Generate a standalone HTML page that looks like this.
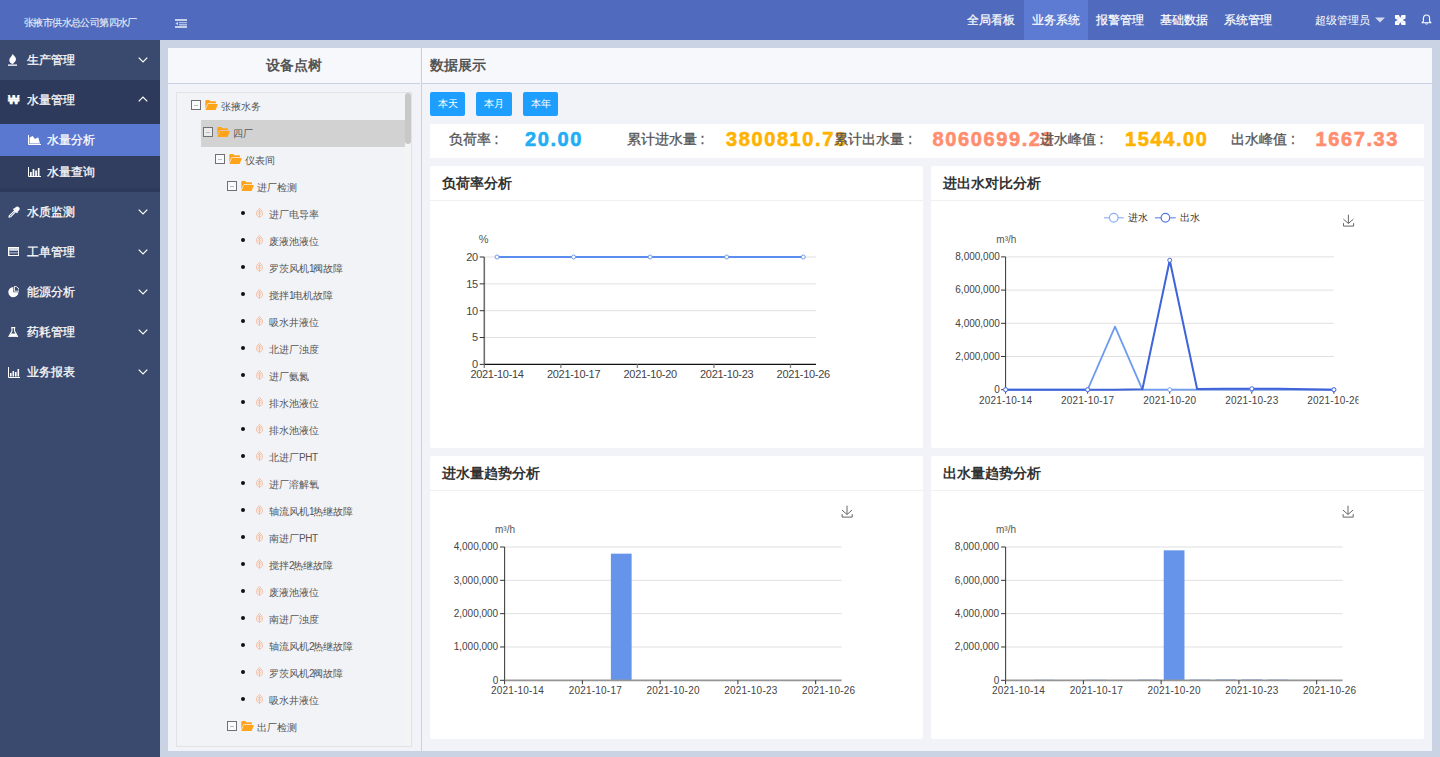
<!DOCTYPE html>
<html><head><meta charset="utf-8">
<style>
*{box-sizing:border-box;margin:0;padding:0}
html,body{width:1440px;height:757px;overflow:hidden}
body{position:relative;background:#CAD3E4;font-family:"Liberation Sans",sans-serif;color:#333}
.abs{position:absolute}
#hdr{left:0;top:0;width:1440px;height:40px;background:#506BBD}
#hdr .title{left:24px;top:15.5px;font-size:10px;color:#E6EBF7;white-space:nowrap;letter-spacing:-0.6px;-webkit-text-stroke:0.15px #E6EBF7}
.nav{top:0;height:40px;width:64px;color:#fff;font-size:12px;line-height:40px;text-align:center;-webkit-text-stroke:0.2px #fff}
.nav.act{background:#5D7BD3}
#side{left:0;top:40px;width:160px;height:717px;background:#3A4A6E}
.mi{left:0;width:160px;height:40px;color:#fff;font-size:12px;line-height:40px;-webkit-text-stroke:0.25px #fff}
.mi .t{position:absolute;left:27px;top:0}
.mi .ic{position:absolute;left:8px;top:14px;width:10px;height:12px}
.chev{position:absolute;left:138px;top:16.5px;width:10px;height:6px}
.sub{left:0;width:160px;height:32px;color:#fff;font-size:12px;line-height:32px;-webkit-text-stroke:0.25px #fff}
.sub .t{position:absolute;left:47px;top:0}
.sub .ic{position:absolute;left:28px;top:10px;width:12px;height:11px}
#lp{left:168px;top:48px;width:252px;height:703px;background:#F2F3F8}
#lph{left:0;top:0;width:252px;height:36px;background:#F6F8FC;border-bottom:1px solid #C9D2E5;font-size:14px;font-weight:bold;color:#555;text-align:center;line-height:35px}
#tree{left:8px;top:44px;width:236px;height:655px;border:1px solid #E2E2E2;background:#F2F3F7;overflow:hidden}
.row{left:0;height:27px;width:236px;font-size:10px;color:#555;line-height:27px;white-space:nowrap}
.cb{position:absolute;top:7px;width:9.6px;height:9.6px;border:1px solid #707070;background:rgba(255,255,255,0.55)}
.cb:after{content:"";position:absolute;left:2px;top:3.5px;width:4px;height:1px;background:#BBB}
.fold{position:absolute}
.dot{position:absolute;top:9.9px;width:4.6px;height:4.6px;border-radius:50%;background:#111;margin-left:-0.2px}
.leaf{position:absolute}
#divl{left:420px;top:48px;width:2px;height:703px;background:#F2F3F8}
#divl:after{content:"";position:absolute;left:1px;top:0;width:1px;height:703px;background:#C9D2E5}
#rp{left:422px;top:48px;width:1010px;height:703px;background:#F2F3F8}
#rph{left:0;top:0;width:1010px;height:36px;background:#F6F8FC;border-bottom:1px solid #C9D2E5;font-size:14px;font-weight:bold;color:#555;line-height:35px;padding-left:8px}
.btn{top:44px;height:24px;background:#1E9FFF;color:#fff;font-size:10px;line-height:24px;text-align:center;border-radius:2px}
#stats{left:8px;top:76px;width:994px;height:34px;background:#fff}
.sl{position:absolute;top:-2px;line-height:34px;font-size:14px;color:#555;white-space:nowrap;-webkit-text-stroke:0.3px #555}
.sv{position:absolute;top:-2px;line-height:34px;font-size:20px;font-weight:bold;white-space:nowrap;-webkit-text-stroke:0.6px currentColor}
.card{background:#fff;border-radius:2px;width:493px;overflow:hidden}
.card .ch{position:absolute;left:0;top:0;width:493px;height:35px;border-bottom:1px solid #F0F0F0;font-size:14px;font-weight:bold;color:#333;line-height:34px;padding-left:12px}
.card svg{position:absolute;left:0;top:0}
</style></head><body>

<div id="hdr" class="abs">
  <div class="abs title">张掖市供水总公司第四水厂</div>
  <svg class="abs" style="left:175px;top:19px" width="12" height="9" viewBox="0 0 12 9"><rect x="0" y="0" width="12" height="2" fill="#C6D1EC"/><rect x="4" y="3.2" width="8" height="1" fill="#C6D1EC"/><rect x="4" y="5" width="8" height="1.5" fill="#AFC0E6"/><rect x="0" y="7" width="12" height="2" fill="#C6D1EC"/><path d="M3 2.8 L0.4 4.5 L3 6.2Z" fill="#C6D1EC"/></svg>
  <div class="abs nav" style="left:959px">全局看板</div>
  <div class="abs nav act" style="left:1024px">业务系统</div>
  <div class="abs nav" style="left:1088px">报警管理</div>
  <div class="abs nav" style="left:1152px">基础数据</div>
  <div class="abs nav" style="left:1216px">系统管理</div>
  <div class="abs" style="left:1315px;top:0;height:40px;line-height:40px;font-size:11.3px;color:#fff;white-space:nowrap">超级管理员</div>
  <svg class="abs" style="left:1375px;top:17px" width="10" height="6" viewBox="0 0 10 6"><path d="M0 0.6 H10 L5 5.4Z" fill="#D3D9EE"/></svg>
  <svg class="abs" style="left:1395px;top:15px" width="10.5" height="10" viewBox="0 0 10.5 10"><path d="M0 0 H3.9 L5.25 3 L6.6 0 H10.5 V3.6 L7.6 5 L10.5 6.4 V10 H6.6 L5.25 7 L3.9 10 H0 V6.4 L2.9 5 L0 3.6Z" fill="#fff"/><path d="M3.6 3.4 L2.6 2.4 M6.9 3.4 L7.9 2.4 M3.6 6.6 L2.6 7.6 M6.9 6.6 L7.9 7.6" stroke="#506BBD" stroke-width="0.5"/></svg>
  <svg class="abs" style="left:1421px;top:14px" width="11" height="11" viewBox="0 0 11 11"><path d="M5.5 1 C3.2 1 2.4 2.8 2.4 4.6 V7.2 L1 8.8 H10 L8.6 7.2 V4.6 C8.6 2.8 7.8 1 5.5 1Z" fill="none" stroke="#fff" stroke-width="1.1" stroke-linejoin="round"/><path d="M4.3 9.6 Q5.5 10.8 6.7 9.6" fill="none" stroke="#fff" stroke-width="1"/></svg>

</div>

<div id="side" class="abs">
<div class="abs mi" style="top:0"><svg class="ic" style="left:7.7px;top:14px;width:9.4px;height:12px" viewBox="0 0 9.4 12"><path d="M4.7 0 C5.3 1.5 8 2.8 8 5.2 C8 7.2 6.2 8.6 4.8 9.9 C2.7 9.7 1.3 8.1 1.3 6.2 C1.3 4 3 3.4 3.7 1.8Z" fill="#fff"/><rect x="0" y="10.4" width="9.4" height="1.5" fill="#E8EAF2"/></svg><span class="t">生产管理</span><svg class="chev" viewBox="0 0 10 6"><path d="M0.7 0.7 L5 5 L9.3 0.7" fill="none" stroke="#fff" stroke-width="1.2"/></svg></div>
<div class="abs" style="left:0;top:40px;width:160px;height:112px;background:#2E3A5B"></div>
<div class="abs mi" style="top:40px"><span class="ic" style="left:8px;top:0;width:14px;height:40px;font-size:12px;font-weight:bold;line-height:40px">&#8361;</span><span class="t">水量管理</span><svg class="chev" style="top:15.8px" viewBox="0 0 10 6"><path d="M0.7 5.3 L5 1 L9.3 5.3" fill="none" stroke="#fff" stroke-width="1.2"/></svg></div>
<div class="abs sub" style="top:84px;background:#5A78CF"><svg class="ic" style="left:28px;top:11px;width:13px;height:10px" viewBox="0 0 13 10"><path d="M0.5 0 V9.5 H13" fill="none" stroke="#fff" stroke-width="1"/><path d="M1.6 8.6 V2.4 L4.6 1 L7 4 L10.2 2.2 L12 8.6Z" fill="#fff"/></svg><span class="t">水量分析</span></div>
<div class="abs sub" style="top:116px;background:#323E5F"><svg class="ic" style="left:28px;top:11px;width:13px;height:10px" viewBox="0 0 13 10"><path d="M0.5 0 V9.5 H13" fill="none" stroke="#fff" stroke-width="1"/><rect x="2" y="5" width="1.7" height="4" fill="#fff"/><rect x="4.6" y="2" width="1.7" height="7" fill="#fff"/><rect x="7.2" y="3.5" width="1.7" height="5.5" fill="#fff"/><rect x="9.8" y="1" width="1.7" height="8" fill="#fff"/></svg><span class="t">水量查询</span></div>
<div class="abs mi" style="top:152px"><svg class="ic" style="left:8px;top:14px;width:12px;height:12px" viewBox="0 0 12 12"><path d="M7.6 1.3 A2.3 2.3 0 0 1 10.9 4.6 L9.7 5.8 L6.4 2.5Z" fill="#fff"/><path d="M5.6 2.6 L9.6 6.6" stroke="#fff" stroke-width="1.8"/><path d="M6.6 4.6 L7.7 5.7 L2.6 10.8 L1 11.2 L1.2 9.9Z" fill="none" stroke="#fff" stroke-width="1.1" stroke-linejoin="round"/></svg><span class="t">水质监测</span><svg class="chev" viewBox="0 0 10 6"><path d="M0.7 0.7 L5 5 L9.3 0.7" fill="none" stroke="#fff" stroke-width="1.2"/></svg></div>
<div class="abs mi" style="top:192px"><svg class="ic" style="left:7.8px;top:14.8px;width:11.5px;height:9.4px" viewBox="0 0 11.5 9.4"><rect x="0.7" y="0.7" width="10.1" height="8" fill="none" stroke="#fff" stroke-width="1.4"/><rect x="1.4" y="3" width="8.7" height="1" fill="#B8C0D8"/><rect x="1.4" y="5.4" width="8.7" height="1" fill="#B8C0D8"/><rect x="1.4" y="1.4" width="8.7" height="1.4" fill="#fff"/></svg><span class="t">工单管理</span><svg class="chev" viewBox="0 0 10 6"><path d="M0.7 0.7 L5 5 L9.3 0.7" fill="none" stroke="#fff" stroke-width="1.2"/></svg></div>
<div class="abs mi" style="top:232px"><svg class="ic" style="left:7.8px;top:14px;width:11.5px;height:11.5px" viewBox="0 0 11.5 11.5"><path d="M5.3 1 A5.1 5.1 0 1 0 10.5 6.3 L5.3 6.3Z" fill="#fff"/><path d="M6.4 0.2 A5 5 0 0 1 11.3 5.2 L6.4 5.2Z" fill="none" stroke="#fff" stroke-width="0.9"/></svg><span class="t">能源分析</span><svg class="chev" viewBox="0 0 10 6"><path d="M0.7 0.7 L5 5 L9.3 0.7" fill="none" stroke="#fff" stroke-width="1.2"/></svg></div>
<div class="abs mi" style="top:272px"><svg class="ic" style="left:8px;top:14.6px;width:10.5px;height:10.5px" viewBox="0 0 10.5 10.5"><path d="M3.2 0.6 H7.3" stroke="#fff" stroke-width="1.2"/><path d="M4 0.8 V4 L1 9.3 Q0.7 9.9 1.4 9.9 H9.1 Q9.8 9.9 9.5 9.3 L6.5 4 V0.8" fill="none" stroke="#fff" stroke-width="1.1"/><path d="M2.9 6.4 H7.6 L9.3 9.6 H1.2Z" fill="#fff"/></svg><span class="t">药耗管理</span><svg class="chev" viewBox="0 0 10 6"><path d="M0.7 0.7 L5 5 L9.3 0.7" fill="none" stroke="#fff" stroke-width="1.2"/></svg></div>
<div class="abs mi" style="top:312px"><svg class="ic" style="top:15px;width:12px;height:11px" viewBox="0 0 12 11"><path d="M0.5 0 V10.5 H12" fill="none" stroke="#fff" stroke-width="1"/><rect x="2" y="6" width="1.6" height="3.5" fill="#fff"/><rect x="4.5" y="4" width="1.6" height="5.5" fill="#fff"/><rect x="7" y="5" width="1.6" height="4.5" fill="#fff"/><rect x="9.5" y="2" width="1.6" height="7.5" fill="#fff"/></svg><span class="t">业务报表</span><svg class="chev" viewBox="0 0 10 6"><path d="M0.7 0.7 L5 5 L9.3 0.7" fill="none" stroke="#fff" stroke-width="1.2"/></svg></div>
</div>
<div id="lp" class="abs">
  <div id="lph" class="abs">设备点树</div>
  <div id="tree" class="abs"><div class="abs" style="left:24px;top:27px;width:204px;height:27px;background:#D2D2D2"></div><div class="abs row" style="top:0px"><span class="cb" style="left:14px"></span><svg class="fold" style="left:28px;top:7px" width="13" height="10" viewBox="0 0 13 10"><path d="M0.3 1 Q0.3 0 1.3 0 H4.3 L5.3 1.2 H10 Q11 1.2 11 2.2 V3.2 H3.2 Q2.6 3.2 2.3 3.8 L0.3 8.5Z" fill="#FFA31A"/><path d="M2.9 4 H12.4 Q13 4 12.8 4.6 L10.8 9.4 Q10.6 10 10 10 H0.8 Q0.3 10 0.5 9.5Z" fill="#FFA31A"/></svg><span class="abs" style="left:44px;top:0">张掖水务</span></div><div class="abs row" style="top:27px"><span class="cb" style="left:26px"></span><svg class="fold" style="left:40px;top:7px" width="13" height="10" viewBox="0 0 13 10"><path d="M0.3 1 Q0.3 0 1.3 0 H4.3 L5.3 1.2 H10 Q11 1.2 11 2.2 V3.2 H3.2 Q2.6 3.2 2.3 3.8 L0.3 8.5Z" fill="#FFA31A"/><path d="M2.9 4 H12.4 Q13 4 12.8 4.6 L10.8 9.4 Q10.6 10 10 10 H0.8 Q0.3 10 0.5 9.5Z" fill="#FFA31A"/></svg><span class="abs" style="left:56px;top:0">四厂</span></div><div class="abs row" style="top:54px"><span class="cb" style="left:38px"></span><svg class="fold" style="left:52px;top:7px" width="13" height="10" viewBox="0 0 13 10"><path d="M0.3 1 Q0.3 0 1.3 0 H4.3 L5.3 1.2 H10 Q11 1.2 11 2.2 V3.2 H3.2 Q2.6 3.2 2.3 3.8 L0.3 8.5Z" fill="#FFA31A"/><path d="M2.9 4 H12.4 Q13 4 12.8 4.6 L10.8 9.4 Q10.6 10 10 10 H0.8 Q0.3 10 0.5 9.5Z" fill="#FFA31A"/></svg><span class="abs" style="left:68px;top:0">仪表间</span></div><div class="abs row" style="top:81px"><span class="cb" style="left:50px"></span><svg class="fold" style="left:64px;top:7px" width="13" height="10" viewBox="0 0 13 10"><path d="M0.3 1 Q0.3 0 1.3 0 H4.3 L5.3 1.2 H10 Q11 1.2 11 2.2 V3.2 H3.2 Q2.6 3.2 2.3 3.8 L0.3 8.5Z" fill="#FFA31A"/><path d="M2.9 4 H12.4 Q13 4 12.8 4.6 L10.8 9.4 Q10.6 10 10 10 H0.8 Q0.3 10 0.5 9.5Z" fill="#FFA31A"/></svg><span class="abs" style="left:80px;top:0">进厂检测</span></div><div class="abs row" style="top:108px"><span class="dot" style="left:64px"></span><svg class="leaf" style="left:79px;top:7px" width="7" height="10" viewBox="0 0 7 10"><path d="M3.5 0.5 C1 2.3 0.5 4.5 0.6 6.2 C0.8 7.9 2 8.8 3.5 8.8 C5 8.8 6.2 7.9 6.4 6.2 C6.5 4.5 6 2.3 3.5 0.5Z" fill="none" stroke="#F7B08A" stroke-width="0.8"/><path d="M3.5 1.8 V9.8 M3.5 4.4 L2 3.3 M3.5 4.4 L5 3.3 M3.5 6.6 L1.8 5.4 M3.5 6.6 L5.2 5.4" fill="none" stroke="#F7B08A" stroke-width="0.7"/></svg><span class="abs" style="left:92px;top:0">进厂电导率</span></div><div class="abs row" style="top:135px"><span class="dot" style="left:64px"></span><svg class="leaf" style="left:79px;top:7px" width="7" height="10" viewBox="0 0 7 10"><path d="M3.5 0.5 C1 2.3 0.5 4.5 0.6 6.2 C0.8 7.9 2 8.8 3.5 8.8 C5 8.8 6.2 7.9 6.4 6.2 C6.5 4.5 6 2.3 3.5 0.5Z" fill="none" stroke="#F7B08A" stroke-width="0.8"/><path d="M3.5 1.8 V9.8 M3.5 4.4 L2 3.3 M3.5 4.4 L5 3.3 M3.5 6.6 L1.8 5.4 M3.5 6.6 L5.2 5.4" fill="none" stroke="#F7B08A" stroke-width="0.7"/></svg><span class="abs" style="left:92px;top:0">废液池液位</span></div><div class="abs row" style="top:162px"><span class="dot" style="left:64px"></span><svg class="leaf" style="left:79px;top:7px" width="7" height="10" viewBox="0 0 7 10"><path d="M3.5 0.5 C1 2.3 0.5 4.5 0.6 6.2 C0.8 7.9 2 8.8 3.5 8.8 C5 8.8 6.2 7.9 6.4 6.2 C6.5 4.5 6 2.3 3.5 0.5Z" fill="none" stroke="#F7B08A" stroke-width="0.8"/><path d="M3.5 1.8 V9.8 M3.5 4.4 L2 3.3 M3.5 4.4 L5 3.3 M3.5 6.6 L1.8 5.4 M3.5 6.6 L5.2 5.4" fill="none" stroke="#F7B08A" stroke-width="0.7"/></svg><span class="abs" style="left:92px;top:0">罗茨风机<span style="letter-spacing:-1.2px">1</span>阀故障</span></div><div class="abs row" style="top:189px"><span class="dot" style="left:64px"></span><svg class="leaf" style="left:79px;top:7px" width="7" height="10" viewBox="0 0 7 10"><path d="M3.5 0.5 C1 2.3 0.5 4.5 0.6 6.2 C0.8 7.9 2 8.8 3.5 8.8 C5 8.8 6.2 7.9 6.4 6.2 C6.5 4.5 6 2.3 3.5 0.5Z" fill="none" stroke="#F7B08A" stroke-width="0.8"/><path d="M3.5 1.8 V9.8 M3.5 4.4 L2 3.3 M3.5 4.4 L5 3.3 M3.5 6.6 L1.8 5.4 M3.5 6.6 L5.2 5.4" fill="none" stroke="#F7B08A" stroke-width="0.7"/></svg><span class="abs" style="left:92px;top:0">搅拌<span style="letter-spacing:-1.2px">1</span>电机故障</span></div><div class="abs row" style="top:216px"><span class="dot" style="left:64px"></span><svg class="leaf" style="left:79px;top:7px" width="7" height="10" viewBox="0 0 7 10"><path d="M3.5 0.5 C1 2.3 0.5 4.5 0.6 6.2 C0.8 7.9 2 8.8 3.5 8.8 C5 8.8 6.2 7.9 6.4 6.2 C6.5 4.5 6 2.3 3.5 0.5Z" fill="none" stroke="#F7B08A" stroke-width="0.8"/><path d="M3.5 1.8 V9.8 M3.5 4.4 L2 3.3 M3.5 4.4 L5 3.3 M3.5 6.6 L1.8 5.4 M3.5 6.6 L5.2 5.4" fill="none" stroke="#F7B08A" stroke-width="0.7"/></svg><span class="abs" style="left:92px;top:0">吸水井液位</span></div><div class="abs row" style="top:243px"><span class="dot" style="left:64px"></span><svg class="leaf" style="left:79px;top:7px" width="7" height="10" viewBox="0 0 7 10"><path d="M3.5 0.5 C1 2.3 0.5 4.5 0.6 6.2 C0.8 7.9 2 8.8 3.5 8.8 C5 8.8 6.2 7.9 6.4 6.2 C6.5 4.5 6 2.3 3.5 0.5Z" fill="none" stroke="#F7B08A" stroke-width="0.8"/><path d="M3.5 1.8 V9.8 M3.5 4.4 L2 3.3 M3.5 4.4 L5 3.3 M3.5 6.6 L1.8 5.4 M3.5 6.6 L5.2 5.4" fill="none" stroke="#F7B08A" stroke-width="0.7"/></svg><span class="abs" style="left:92px;top:0">北进厂浊度</span></div><div class="abs row" style="top:270px"><span class="dot" style="left:64px"></span><svg class="leaf" style="left:79px;top:7px" width="7" height="10" viewBox="0 0 7 10"><path d="M3.5 0.5 C1 2.3 0.5 4.5 0.6 6.2 C0.8 7.9 2 8.8 3.5 8.8 C5 8.8 6.2 7.9 6.4 6.2 C6.5 4.5 6 2.3 3.5 0.5Z" fill="none" stroke="#F7B08A" stroke-width="0.8"/><path d="M3.5 1.8 V9.8 M3.5 4.4 L2 3.3 M3.5 4.4 L5 3.3 M3.5 6.6 L1.8 5.4 M3.5 6.6 L5.2 5.4" fill="none" stroke="#F7B08A" stroke-width="0.7"/></svg><span class="abs" style="left:92px;top:0">进厂氨氮</span></div><div class="abs row" style="top:297px"><span class="dot" style="left:64px"></span><svg class="leaf" style="left:79px;top:7px" width="7" height="10" viewBox="0 0 7 10"><path d="M3.5 0.5 C1 2.3 0.5 4.5 0.6 6.2 C0.8 7.9 2 8.8 3.5 8.8 C5 8.8 6.2 7.9 6.4 6.2 C6.5 4.5 6 2.3 3.5 0.5Z" fill="none" stroke="#F7B08A" stroke-width="0.8"/><path d="M3.5 1.8 V9.8 M3.5 4.4 L2 3.3 M3.5 4.4 L5 3.3 M3.5 6.6 L1.8 5.4 M3.5 6.6 L5.2 5.4" fill="none" stroke="#F7B08A" stroke-width="0.7"/></svg><span class="abs" style="left:92px;top:0">排水池液位</span></div><div class="abs row" style="top:324px"><span class="dot" style="left:64px"></span><svg class="leaf" style="left:79px;top:7px" width="7" height="10" viewBox="0 0 7 10"><path d="M3.5 0.5 C1 2.3 0.5 4.5 0.6 6.2 C0.8 7.9 2 8.8 3.5 8.8 C5 8.8 6.2 7.9 6.4 6.2 C6.5 4.5 6 2.3 3.5 0.5Z" fill="none" stroke="#F7B08A" stroke-width="0.8"/><path d="M3.5 1.8 V9.8 M3.5 4.4 L2 3.3 M3.5 4.4 L5 3.3 M3.5 6.6 L1.8 5.4 M3.5 6.6 L5.2 5.4" fill="none" stroke="#F7B08A" stroke-width="0.7"/></svg><span class="abs" style="left:92px;top:0">排水池液位</span></div><div class="abs row" style="top:351px"><span class="dot" style="left:64px"></span><svg class="leaf" style="left:79px;top:7px" width="7" height="10" viewBox="0 0 7 10"><path d="M3.5 0.5 C1 2.3 0.5 4.5 0.6 6.2 C0.8 7.9 2 8.8 3.5 8.8 C5 8.8 6.2 7.9 6.4 6.2 C6.5 4.5 6 2.3 3.5 0.5Z" fill="none" stroke="#F7B08A" stroke-width="0.8"/><path d="M3.5 1.8 V9.8 M3.5 4.4 L2 3.3 M3.5 4.4 L5 3.3 M3.5 6.6 L1.8 5.4 M3.5 6.6 L5.2 5.4" fill="none" stroke="#F7B08A" stroke-width="0.7"/></svg><span class="abs" style="left:92px;top:0">北进厂<span style="letter-spacing:-0.4px">PHT</span></span></div><div class="abs row" style="top:378px"><span class="dot" style="left:64px"></span><svg class="leaf" style="left:79px;top:7px" width="7" height="10" viewBox="0 0 7 10"><path d="M3.5 0.5 C1 2.3 0.5 4.5 0.6 6.2 C0.8 7.9 2 8.8 3.5 8.8 C5 8.8 6.2 7.9 6.4 6.2 C6.5 4.5 6 2.3 3.5 0.5Z" fill="none" stroke="#F7B08A" stroke-width="0.8"/><path d="M3.5 1.8 V9.8 M3.5 4.4 L2 3.3 M3.5 4.4 L5 3.3 M3.5 6.6 L1.8 5.4 M3.5 6.6 L5.2 5.4" fill="none" stroke="#F7B08A" stroke-width="0.7"/></svg><span class="abs" style="left:92px;top:0">进厂溶解氧</span></div><div class="abs row" style="top:405px"><span class="dot" style="left:64px"></span><svg class="leaf" style="left:79px;top:7px" width="7" height="10" viewBox="0 0 7 10"><path d="M3.5 0.5 C1 2.3 0.5 4.5 0.6 6.2 C0.8 7.9 2 8.8 3.5 8.8 C5 8.8 6.2 7.9 6.4 6.2 C6.5 4.5 6 2.3 3.5 0.5Z" fill="none" stroke="#F7B08A" stroke-width="0.8"/><path d="M3.5 1.8 V9.8 M3.5 4.4 L2 3.3 M3.5 4.4 L5 3.3 M3.5 6.6 L1.8 5.4 M3.5 6.6 L5.2 5.4" fill="none" stroke="#F7B08A" stroke-width="0.7"/></svg><span class="abs" style="left:92px;top:0">轴流风机<span style="letter-spacing:-1.2px">1</span>热继故障</span></div><div class="abs row" style="top:432px"><span class="dot" style="left:64px"></span><svg class="leaf" style="left:79px;top:7px" width="7" height="10" viewBox="0 0 7 10"><path d="M3.5 0.5 C1 2.3 0.5 4.5 0.6 6.2 C0.8 7.9 2 8.8 3.5 8.8 C5 8.8 6.2 7.9 6.4 6.2 C6.5 4.5 6 2.3 3.5 0.5Z" fill="none" stroke="#F7B08A" stroke-width="0.8"/><path d="M3.5 1.8 V9.8 M3.5 4.4 L2 3.3 M3.5 4.4 L5 3.3 M3.5 6.6 L1.8 5.4 M3.5 6.6 L5.2 5.4" fill="none" stroke="#F7B08A" stroke-width="0.7"/></svg><span class="abs" style="left:92px;top:0">南进厂<span style="letter-spacing:-0.4px">PHT</span></span></div><div class="abs row" style="top:459px"><span class="dot" style="left:64px"></span><svg class="leaf" style="left:79px;top:7px" width="7" height="10" viewBox="0 0 7 10"><path d="M3.5 0.5 C1 2.3 0.5 4.5 0.6 6.2 C0.8 7.9 2 8.8 3.5 8.8 C5 8.8 6.2 7.9 6.4 6.2 C6.5 4.5 6 2.3 3.5 0.5Z" fill="none" stroke="#F7B08A" stroke-width="0.8"/><path d="M3.5 1.8 V9.8 M3.5 4.4 L2 3.3 M3.5 4.4 L5 3.3 M3.5 6.6 L1.8 5.4 M3.5 6.6 L5.2 5.4" fill="none" stroke="#F7B08A" stroke-width="0.7"/></svg><span class="abs" style="left:92px;top:0">搅拌<span style="letter-spacing:-1.2px">2</span>热继故障</span></div><div class="abs row" style="top:486px"><span class="dot" style="left:64px"></span><svg class="leaf" style="left:79px;top:7px" width="7" height="10" viewBox="0 0 7 10"><path d="M3.5 0.5 C1 2.3 0.5 4.5 0.6 6.2 C0.8 7.9 2 8.8 3.5 8.8 C5 8.8 6.2 7.9 6.4 6.2 C6.5 4.5 6 2.3 3.5 0.5Z" fill="none" stroke="#F7B08A" stroke-width="0.8"/><path d="M3.5 1.8 V9.8 M3.5 4.4 L2 3.3 M3.5 4.4 L5 3.3 M3.5 6.6 L1.8 5.4 M3.5 6.6 L5.2 5.4" fill="none" stroke="#F7B08A" stroke-width="0.7"/></svg><span class="abs" style="left:92px;top:0">废液池液位</span></div><div class="abs row" style="top:513px"><span class="dot" style="left:64px"></span><svg class="leaf" style="left:79px;top:7px" width="7" height="10" viewBox="0 0 7 10"><path d="M3.5 0.5 C1 2.3 0.5 4.5 0.6 6.2 C0.8 7.9 2 8.8 3.5 8.8 C5 8.8 6.2 7.9 6.4 6.2 C6.5 4.5 6 2.3 3.5 0.5Z" fill="none" stroke="#F7B08A" stroke-width="0.8"/><path d="M3.5 1.8 V9.8 M3.5 4.4 L2 3.3 M3.5 4.4 L5 3.3 M3.5 6.6 L1.8 5.4 M3.5 6.6 L5.2 5.4" fill="none" stroke="#F7B08A" stroke-width="0.7"/></svg><span class="abs" style="left:92px;top:0">南进厂浊度</span></div><div class="abs row" style="top:540px"><span class="dot" style="left:64px"></span><svg class="leaf" style="left:79px;top:7px" width="7" height="10" viewBox="0 0 7 10"><path d="M3.5 0.5 C1 2.3 0.5 4.5 0.6 6.2 C0.8 7.9 2 8.8 3.5 8.8 C5 8.8 6.2 7.9 6.4 6.2 C6.5 4.5 6 2.3 3.5 0.5Z" fill="none" stroke="#F7B08A" stroke-width="0.8"/><path d="M3.5 1.8 V9.8 M3.5 4.4 L2 3.3 M3.5 4.4 L5 3.3 M3.5 6.6 L1.8 5.4 M3.5 6.6 L5.2 5.4" fill="none" stroke="#F7B08A" stroke-width="0.7"/></svg><span class="abs" style="left:92px;top:0">轴流风机<span style="letter-spacing:-1.2px">2</span>热继故障</span></div><div class="abs row" style="top:567px"><span class="dot" style="left:64px"></span><svg class="leaf" style="left:79px;top:7px" width="7" height="10" viewBox="0 0 7 10"><path d="M3.5 0.5 C1 2.3 0.5 4.5 0.6 6.2 C0.8 7.9 2 8.8 3.5 8.8 C5 8.8 6.2 7.9 6.4 6.2 C6.5 4.5 6 2.3 3.5 0.5Z" fill="none" stroke="#F7B08A" stroke-width="0.8"/><path d="M3.5 1.8 V9.8 M3.5 4.4 L2 3.3 M3.5 4.4 L5 3.3 M3.5 6.6 L1.8 5.4 M3.5 6.6 L5.2 5.4" fill="none" stroke="#F7B08A" stroke-width="0.7"/></svg><span class="abs" style="left:92px;top:0">罗茨风机<span style="letter-spacing:-1.2px">2</span>阀故障</span></div><div class="abs row" style="top:594px"><span class="dot" style="left:64px"></span><svg class="leaf" style="left:79px;top:7px" width="7" height="10" viewBox="0 0 7 10"><path d="M3.5 0.5 C1 2.3 0.5 4.5 0.6 6.2 C0.8 7.9 2 8.8 3.5 8.8 C5 8.8 6.2 7.9 6.4 6.2 C6.5 4.5 6 2.3 3.5 0.5Z" fill="none" stroke="#F7B08A" stroke-width="0.8"/><path d="M3.5 1.8 V9.8 M3.5 4.4 L2 3.3 M3.5 4.4 L5 3.3 M3.5 6.6 L1.8 5.4 M3.5 6.6 L5.2 5.4" fill="none" stroke="#F7B08A" stroke-width="0.7"/></svg><span class="abs" style="left:92px;top:0">吸水井液位</span></div><div class="abs row" style="top:621px"><span class="cb" style="left:50px"></span><svg class="fold" style="left:64px;top:7px" width="13" height="10" viewBox="0 0 13 10"><path d="M0.3 1 Q0.3 0 1.3 0 H4.3 L5.3 1.2 H10 Q11 1.2 11 2.2 V3.2 H3.2 Q2.6 3.2 2.3 3.8 L0.3 8.5Z" fill="#FFA31A"/><path d="M2.9 4 H12.4 Q13 4 12.8 4.6 L10.8 9.4 Q10.6 10 10 10 H0.8 Q0.3 10 0.5 9.5Z" fill="#FFA31A"/></svg><span class="abs" style="left:80px;top:0">出厂检测</span></div><div class="abs" style="left:228px;top:0;width:6px;height:653px;background:#F4F4F4"></div><div class="abs" style="left:228px;top:0;width:6px;height:51px;background:#C8C8C8;border-radius:3px"></div></div>
</div>
<div id="divl" class="abs"></div>
<div id="rp" class="abs">
  <div id="rph" class="abs">数据展示</div>
  <div class="abs btn" style="left:8px;width:35px">本天</div>
  <div class="abs btn" style="left:54px;width:36px">本月</div>
  <div class="abs btn" style="left:101px;width:35px">本年</div>
  <div id="stats" class="abs"><span class="sv" style="left:95.0px;color:#20AEF5;letter-spacing:1.6px">20.00</span><span class="sv" style="left:296.0px;color:#FFB300;letter-spacing:1.6px">3800810.73</span><span class="sv" style="left:502.6px;color:#FF8D6E;letter-spacing:1.6px">8060699.23</span><span class="sv" style="left:695.0px;color:#FFB300;letter-spacing:1.6px">1544.00</span><span class="sv" style="left:885.5px;color:#FF8D6E;letter-spacing:1.6px">1667.33</span><span class="sl" style="left:18.5px">负荷率<span style="margin-left:4px">:</span></span><span class="sl" style="left:196.6px">累计进水量<span style="margin-left:4px">:</span></span><span class="sl" style="left:404.2px">累计出水量<span style="margin-left:4px">:</span></span><span class="sl" style="left:609.5px">进水峰值<span style="margin-left:4px">:</span></span><span class="sl" style="left:801.0px">出水峰值<span style="margin-left:4px">:</span></span></div>
</div>
<div class="abs card" style="left:430px;top:166px;height:282px"><div class="ch">负荷率分析</div><svg width="493" height="282" viewBox="0 0 493 282" font-family="Liberation Sans, sans-serif" style="position:absolute;left:0;top:0"><line x1="54.3" y1="91.00" x2="386.0" y2="91.00" stroke="#E0E0E0" stroke-width="1"/><line x1="54.3" y1="117.85" x2="386.0" y2="117.85" stroke="#E0E0E0" stroke-width="1"/><line x1="54.3" y1="144.70" x2="386.0" y2="144.70" stroke="#E0E0E0" stroke-width="1"/><line x1="54.3" y1="171.55" x2="386.0" y2="171.55" stroke="#E0E0E0" stroke-width="1"/><line x1="54.3" y1="91.0" x2="54.3" y2="198.4" stroke="#6E6E6E" stroke-width="1.6"/><line x1="49.699999999999996" y1="91.00" x2="54.3" y2="91.00" stroke="#333" stroke-width="1"/><text x="47.80" y="94.90" text-anchor="end" font-size="11" fill="#444" letter-spacing="-0.3" >20</text><line x1="49.699999999999996" y1="117.85" x2="54.3" y2="117.85" stroke="#333" stroke-width="1"/><text x="47.80" y="121.75" text-anchor="end" font-size="11" fill="#444" letter-spacing="-0.3" >15</text><line x1="49.699999999999996" y1="144.70" x2="54.3" y2="144.70" stroke="#333" stroke-width="1"/><text x="47.80" y="148.60" text-anchor="end" font-size="11" fill="#444" letter-spacing="-0.3" >10</text><line x1="49.699999999999996" y1="171.55" x2="54.3" y2="171.55" stroke="#333" stroke-width="1"/><text x="47.80" y="175.45" text-anchor="end" font-size="11" fill="#444" letter-spacing="-0.3" >5</text><line x1="49.699999999999996" y1="198.40" x2="54.3" y2="198.40" stroke="#333" stroke-width="1"/><text x="47.80" y="202.30" text-anchor="end" font-size="11" fill="#444" letter-spacing="-0.3" >0</text><line x1="54.3" y1="198.4" x2="386.0" y2="198.4" stroke="#111" stroke-width="1.4"/><line x1="54.30" y1="198.4" x2="54.30" y2="202.0" stroke="#888" stroke-width="1.4"/><text x="67.06" y="212.00" text-anchor="middle" font-size="11" fill="#444" letter-spacing="-0.3" >2021-10-14</text><line x1="130.85" y1="198.4" x2="130.85" y2="202.0" stroke="#888" stroke-width="1.4"/><text x="143.60" y="212.00" text-anchor="middle" font-size="11" fill="#444" letter-spacing="-0.3" >2021-10-17</text><line x1="207.39" y1="198.4" x2="207.39" y2="202.0" stroke="#888" stroke-width="1.4"/><text x="220.15" y="212.00" text-anchor="middle" font-size="11" fill="#444" letter-spacing="-0.3" >2021-10-20</text><line x1="283.94" y1="198.4" x2="283.94" y2="202.0" stroke="#888" stroke-width="1.4"/><text x="296.70" y="212.00" text-anchor="middle" font-size="11" fill="#444" letter-spacing="-0.3" >2021-10-23</text><line x1="360.48" y1="198.4" x2="360.48" y2="202.0" stroke="#888" stroke-width="1.4"/><text x="373.24" y="212.00" text-anchor="middle" font-size="11" fill="#444" letter-spacing="-0.3" >2021-10-26</text><text x="53.50" y="77.40" text-anchor="middle" font-size="11" fill="#555" letter-spacing="-0.3" >%</text><line x1="67.06" y1="91.0" x2="373.24" y2="91.0" stroke="#5B8DEE" stroke-width="2"/><circle cx="67.06" cy="91.0" r="2" fill="#fff" stroke="#6F9CF0" stroke-width="1"/><circle cx="143.60" cy="91.0" r="2" fill="#fff" stroke="#6F9CF0" stroke-width="1"/><circle cx="220.15" cy="91.0" r="2" fill="#fff" stroke="#6F9CF0" stroke-width="1"/><circle cx="296.70" cy="91.0" r="2" fill="#fff" stroke="#6F9CF0" stroke-width="1"/><circle cx="373.24" cy="91.0" r="2" fill="#fff" stroke="#6F9CF0" stroke-width="1"/></svg></div>
<div class="abs card" style="left:931px;top:166px;height:282px"><div class="ch">进出水对比分析</div><svg width="493" height="282" viewBox="0 0 493 282" font-family="Liberation Sans, sans-serif" style="position:absolute;left:0;top:0"><line x1="74.6" y1="90.90" x2="402.9" y2="90.90" stroke="#E0E0E0" stroke-width="1"/><line x1="74.6" y1="124.10" x2="402.9" y2="124.10" stroke="#E0E0E0" stroke-width="1"/><line x1="74.6" y1="157.30" x2="402.9" y2="157.30" stroke="#E0E0E0" stroke-width="1"/><line x1="74.6" y1="190.50" x2="402.9" y2="190.50" stroke="#E0E0E0" stroke-width="1"/><line x1="74.6" y1="90.9" x2="74.6" y2="223.7" stroke="#333" stroke-width="1"/><line x1="70.1" y1="90.90" x2="74.6" y2="90.90" stroke="#333" stroke-width="1"/><text x="68.80" y="94.10" text-anchor="end" font-size="10" fill="#444" letter-spacing="0" >8,000,000</text><line x1="70.1" y1="124.10" x2="74.6" y2="124.10" stroke="#333" stroke-width="1"/><text x="68.80" y="127.30" text-anchor="end" font-size="10" fill="#444" letter-spacing="0" >6,000,000</text><line x1="70.1" y1="157.30" x2="74.6" y2="157.30" stroke="#333" stroke-width="1"/><text x="68.80" y="160.50" text-anchor="end" font-size="10" fill="#444" letter-spacing="0" >4,000,000</text><line x1="70.1" y1="190.50" x2="74.6" y2="190.50" stroke="#333" stroke-width="1"/><text x="68.80" y="193.70" text-anchor="end" font-size="10" fill="#444" letter-spacing="0" >2,000,000</text><line x1="70.1" y1="223.70" x2="74.6" y2="223.70" stroke="#333" stroke-width="1"/><text x="68.80" y="226.90" text-anchor="end" font-size="10" fill="#444" letter-spacing="0" >0</text><line x1="74.6" y1="223.7" x2="402.9" y2="223.7" stroke="#333" stroke-width="1"/><line x1="74.60" y1="223.7" x2="74.60" y2="227.7" stroke="#333" stroke-width="1"/><text x="74.60" y="237.60" text-anchor="middle" font-size="10" fill="#444" letter-spacing="0.2" clip-path="url(#clip2)">2021-10-14</text><line x1="156.67" y1="223.7" x2="156.67" y2="227.7" stroke="#333" stroke-width="1"/><text x="156.67" y="237.60" text-anchor="middle" font-size="10" fill="#444" letter-spacing="0.2" clip-path="url(#clip2)">2021-10-17</text><line x1="238.75" y1="223.7" x2="238.75" y2="227.7" stroke="#333" stroke-width="1"/><text x="238.75" y="237.60" text-anchor="middle" font-size="10" fill="#444" letter-spacing="0.2" clip-path="url(#clip2)">2021-10-20</text><line x1="320.82" y1="223.7" x2="320.82" y2="227.7" stroke="#333" stroke-width="1"/><text x="320.82" y="237.60" text-anchor="middle" font-size="10" fill="#444" letter-spacing="0.2" clip-path="url(#clip2)">2021-10-23</text><line x1="402.90" y1="223.7" x2="402.90" y2="227.7" stroke="#333" stroke-width="1"/><text x="402.90" y="237.60" text-anchor="middle" font-size="10" fill="#444" letter-spacing="0.2" clip-path="url(#clip2)">2021-10-26</text><clipPath id="clip2"><rect x="0" y="0" width="427.5" height="282"/></clipPath><text x="75.30" y="77.00" text-anchor="middle" font-size="10" fill="#555" letter-spacing="0" >m³/h</text><path d="M74.60 223.70 L101.96 223.70 L129.32 223.70 L156.67 223.70 L184.03 160.62 L211.39 223.70 L238.75 223.70 L266.11 223.70 L293.47 223.70 L320.82 223.70 L348.18 223.70 L375.54 223.70 L402.90 223.70" fill="none" stroke="#6E9AF1" stroke-width="1.8" stroke-linejoin="round"/><path d="M74.60 223.70 L101.96 223.70 L129.32 223.70 L156.67 223.70 L184.03 223.70 L211.39 223.20 L238.75 94.22 L266.11 223.04 L293.47 222.87 L320.82 222.70 L348.18 222.70 L375.54 223.20 L402.90 223.70" fill="none" stroke="#3F63D8" stroke-width="2" stroke-linejoin="round"/><circle cx="74.60" cy="223.70" r="2" fill="#fff" stroke="#7CA4F3" stroke-width="1"/><circle cx="156.67" cy="223.70" r="2" fill="#fff" stroke="#7CA4F3" stroke-width="1"/><circle cx="238.75" cy="223.70" r="2" fill="#fff" stroke="#7CA4F3" stroke-width="1"/><circle cx="320.82" cy="223.70" r="2" fill="#fff" stroke="#7CA4F3" stroke-width="1"/><circle cx="402.90" cy="223.70" r="2" fill="#fff" stroke="#7CA4F3" stroke-width="1"/><circle cx="74.60" cy="223.70" r="2" fill="#fff" stroke="#4A6CDA" stroke-width="1"/><circle cx="156.67" cy="223.70" r="2" fill="#fff" stroke="#4A6CDA" stroke-width="1"/><circle cx="238.75" cy="94.22" r="2" fill="#fff" stroke="#4A6CDA" stroke-width="1"/><circle cx="320.82" cy="222.70" r="2" fill="#fff" stroke="#4A6CDA" stroke-width="1"/><circle cx="402.90" cy="223.70" r="2" fill="#fff" stroke="#4A6CDA" stroke-width="1"/><line x1="173" y1="51.75" x2="192.75" y2="51.75" stroke="#A9C3F7" stroke-width="1.6"/><circle cx="182.75" cy="51.75" r="4.3" fill="#fff" stroke="#8AAEF5" stroke-width="1.2"/><text x="196.80" y="55.00" text-anchor="start" font-size="10" fill="#333" letter-spacing="0" >进水</text><line x1="224" y1="51.75" x2="244.75" y2="51.75" stroke="#8CA6EC" stroke-width="1.6"/><circle cx="234.4" cy="51.75" r="4.3" fill="#fff" stroke="#5476E1" stroke-width="1.2"/><text x="249.00" y="55.00" text-anchor="start" font-size="10" fill="#333" letter-spacing="0" >出水</text><g transform="translate(412,48.7)" fill="none" stroke="#666" stroke-width="1"><path d="M5.4 0 V8.6"/><path d="M0.4 4.4 L5.4 8.8 L10.4 4.4"/><path d="M0.5 8.4 V11.4 H10.6 V8.4"/></g></svg></div>
<div class="abs card" style="left:430px;top:456px;height:283px"><div class="ch">进水量趋势分析</div><svg width="493" height="283" viewBox="0 0 493 283" font-family="Liberation Sans, sans-serif" style="position:absolute;left:0;top:0"><line x1="74.6" y1="91.00" x2="411.6" y2="91.00" stroke="#E0E0E0" stroke-width="1"/><line x1="74.6" y1="124.33" x2="411.6" y2="124.33" stroke="#E0E0E0" stroke-width="1"/><line x1="74.6" y1="157.65" x2="411.6" y2="157.65" stroke="#E0E0E0" stroke-width="1"/><line x1="74.6" y1="190.98" x2="411.6" y2="190.98" stroke="#E0E0E0" stroke-width="1"/><line x1="74.6" y1="91.0" x2="74.6" y2="224.3" stroke="#444" stroke-width="1.1"/><line x1="70.1" y1="91.00" x2="74.6" y2="91.00" stroke="#333" stroke-width="1"/><text x="68.20" y="94.20" text-anchor="end" font-size="10" fill="#444" letter-spacing="0" >4,000,000</text><line x1="70.1" y1="124.33" x2="74.6" y2="124.33" stroke="#333" stroke-width="1"/><text x="68.20" y="127.53" text-anchor="end" font-size="10" fill="#444" letter-spacing="0" >3,000,000</text><line x1="70.1" y1="157.65" x2="74.6" y2="157.65" stroke="#333" stroke-width="1"/><text x="68.20" y="160.85" text-anchor="end" font-size="10" fill="#444" letter-spacing="0" >2,000,000</text><line x1="70.1" y1="190.98" x2="74.6" y2="190.98" stroke="#333" stroke-width="1"/><text x="68.20" y="194.18" text-anchor="end" font-size="10" fill="#444" letter-spacing="0" >1,000,000</text><line x1="70.1" y1="224.30" x2="74.6" y2="224.30" stroke="#333" stroke-width="1"/><text x="68.20" y="227.50" text-anchor="end" font-size="10" fill="#444" letter-spacing="0" >0</text><rect x="180.88" y="97.66" width="20.74" height="126.64" fill="#6594EA"/><line x1="74.6" y1="224.3" x2="411.6" y2="224.3" stroke="#959595" stroke-width="1.8"/><line x1="74.60" y1="224.3" x2="74.60" y2="228.3" stroke="#333" stroke-width="1"/><text x="87.56" y="238.20" text-anchor="middle" font-size="10" fill="#444" letter-spacing="0.2" >2021-10-14</text><line x1="152.37" y1="224.3" x2="152.37" y2="228.3" stroke="#333" stroke-width="1"/><text x="165.33" y="238.20" text-anchor="middle" font-size="10" fill="#444" letter-spacing="0.2" >2021-10-17</text><line x1="230.14" y1="224.3" x2="230.14" y2="228.3" stroke="#333" stroke-width="1"/><text x="243.10" y="238.20" text-anchor="middle" font-size="10" fill="#444" letter-spacing="0.2" >2021-10-20</text><line x1="307.91" y1="224.3" x2="307.91" y2="228.3" stroke="#333" stroke-width="1"/><text x="320.87" y="238.20" text-anchor="middle" font-size="10" fill="#444" letter-spacing="0.2" >2021-10-23</text><line x1="385.68" y1="224.3" x2="385.68" y2="228.3" stroke="#333" stroke-width="1"/><text x="398.64" y="238.20" text-anchor="middle" font-size="10" fill="#444" letter-spacing="0.2" >2021-10-26</text><text x="75.00" y="77.00" text-anchor="middle" font-size="10" fill="#555" letter-spacing="0" >m³/h</text><g transform="translate(411.6,49.7)" fill="none" stroke="#666" stroke-width="1"><path d="M5.4 0 V8.6"/><path d="M0.4 4.4 L5.4 8.8 L10.4 4.4"/><path d="M0.5 8.4 V11.4 H10.6 V8.4"/></g></svg></div>
<div class="abs card" style="left:931px;top:456px;height:283px"><div class="ch">出水量趋势分析</div><svg width="493" height="283" viewBox="0 0 493 283" font-family="Liberation Sans, sans-serif" style="position:absolute;left:0;top:0"><line x1="74.6" y1="91.00" x2="411.6" y2="91.00" stroke="#E0E0E0" stroke-width="1"/><line x1="74.6" y1="124.33" x2="411.6" y2="124.33" stroke="#E0E0E0" stroke-width="1"/><line x1="74.6" y1="157.65" x2="411.6" y2="157.65" stroke="#E0E0E0" stroke-width="1"/><line x1="74.6" y1="190.98" x2="411.6" y2="190.98" stroke="#E0E0E0" stroke-width="1"/><line x1="74.6" y1="91.0" x2="74.6" y2="224.3" stroke="#444" stroke-width="1.1"/><line x1="70.1" y1="91.00" x2="74.6" y2="91.00" stroke="#333" stroke-width="1"/><text x="68.20" y="94.20" text-anchor="end" font-size="10" fill="#444" letter-spacing="0" >8,000,000</text><line x1="70.1" y1="124.33" x2="74.6" y2="124.33" stroke="#333" stroke-width="1"/><text x="68.20" y="127.53" text-anchor="end" font-size="10" fill="#444" letter-spacing="0" >6,000,000</text><line x1="70.1" y1="157.65" x2="74.6" y2="157.65" stroke="#333" stroke-width="1"/><text x="68.20" y="160.85" text-anchor="end" font-size="10" fill="#444" letter-spacing="0" >4,000,000</text><line x1="70.1" y1="190.98" x2="74.6" y2="190.98" stroke="#333" stroke-width="1"/><text x="68.20" y="194.18" text-anchor="end" font-size="10" fill="#444" letter-spacing="0" >2,000,000</text><line x1="70.1" y1="224.30" x2="74.6" y2="224.30" stroke="#333" stroke-width="1"/><text x="68.20" y="227.50" text-anchor="end" font-size="10" fill="#444" letter-spacing="0" >0</text><rect x="103.12" y="223.80" width="20.74" height="0.50" fill="#6594EA"/><rect x="129.04" y="223.97" width="20.74" height="0.33" fill="#6594EA"/><rect x="154.96" y="223.80" width="20.74" height="0.50" fill="#6594EA"/><rect x="180.88" y="223.97" width="20.74" height="0.33" fill="#6594EA"/><rect x="206.81" y="223.63" width="20.74" height="0.67" fill="#6594EA"/><rect x="232.73" y="94.33" width="20.74" height="129.97" fill="#6594EA"/><rect x="258.65" y="223.63" width="20.74" height="0.67" fill="#6594EA"/><rect x="284.58" y="223.47" width="20.74" height="0.83" fill="#6594EA"/><rect x="310.50" y="223.47" width="20.74" height="0.83" fill="#6594EA"/><rect x="336.42" y="223.63" width="20.74" height="0.67" fill="#6594EA"/><rect x="362.35" y="223.97" width="20.74" height="0.33" fill="#6594EA"/><rect x="388.27" y="224.13" width="20.74" height="0.17" fill="#6594EA"/><line x1="74.6" y1="224.3" x2="411.6" y2="224.3" stroke="#959595" stroke-width="1.8"/><line x1="74.60" y1="224.3" x2="74.60" y2="228.3" stroke="#333" stroke-width="1"/><text x="87.56" y="238.20" text-anchor="middle" font-size="10" fill="#444" letter-spacing="0.2" >2021-10-14</text><line x1="152.37" y1="224.3" x2="152.37" y2="228.3" stroke="#333" stroke-width="1"/><text x="165.33" y="238.20" text-anchor="middle" font-size="10" fill="#444" letter-spacing="0.2" >2021-10-17</text><line x1="230.14" y1="224.3" x2="230.14" y2="228.3" stroke="#333" stroke-width="1"/><text x="243.10" y="238.20" text-anchor="middle" font-size="10" fill="#444" letter-spacing="0.2" >2021-10-20</text><line x1="307.91" y1="224.3" x2="307.91" y2="228.3" stroke="#333" stroke-width="1"/><text x="320.87" y="238.20" text-anchor="middle" font-size="10" fill="#444" letter-spacing="0.2" >2021-10-23</text><line x1="385.68" y1="224.3" x2="385.68" y2="228.3" stroke="#333" stroke-width="1"/><text x="398.64" y="238.20" text-anchor="middle" font-size="10" fill="#444" letter-spacing="0.2" >2021-10-26</text><text x="75.00" y="77.00" text-anchor="middle" font-size="10" fill="#555" letter-spacing="0" >m³/h</text><g transform="translate(411.6,49.7)" fill="none" stroke="#666" stroke-width="1"><path d="M5.4 0 V8.6"/><path d="M0.4 4.4 L5.4 8.8 L10.4 4.4"/><path d="M0.5 8.4 V11.4 H10.6 V8.4"/></g></svg></div>
</body></html>
